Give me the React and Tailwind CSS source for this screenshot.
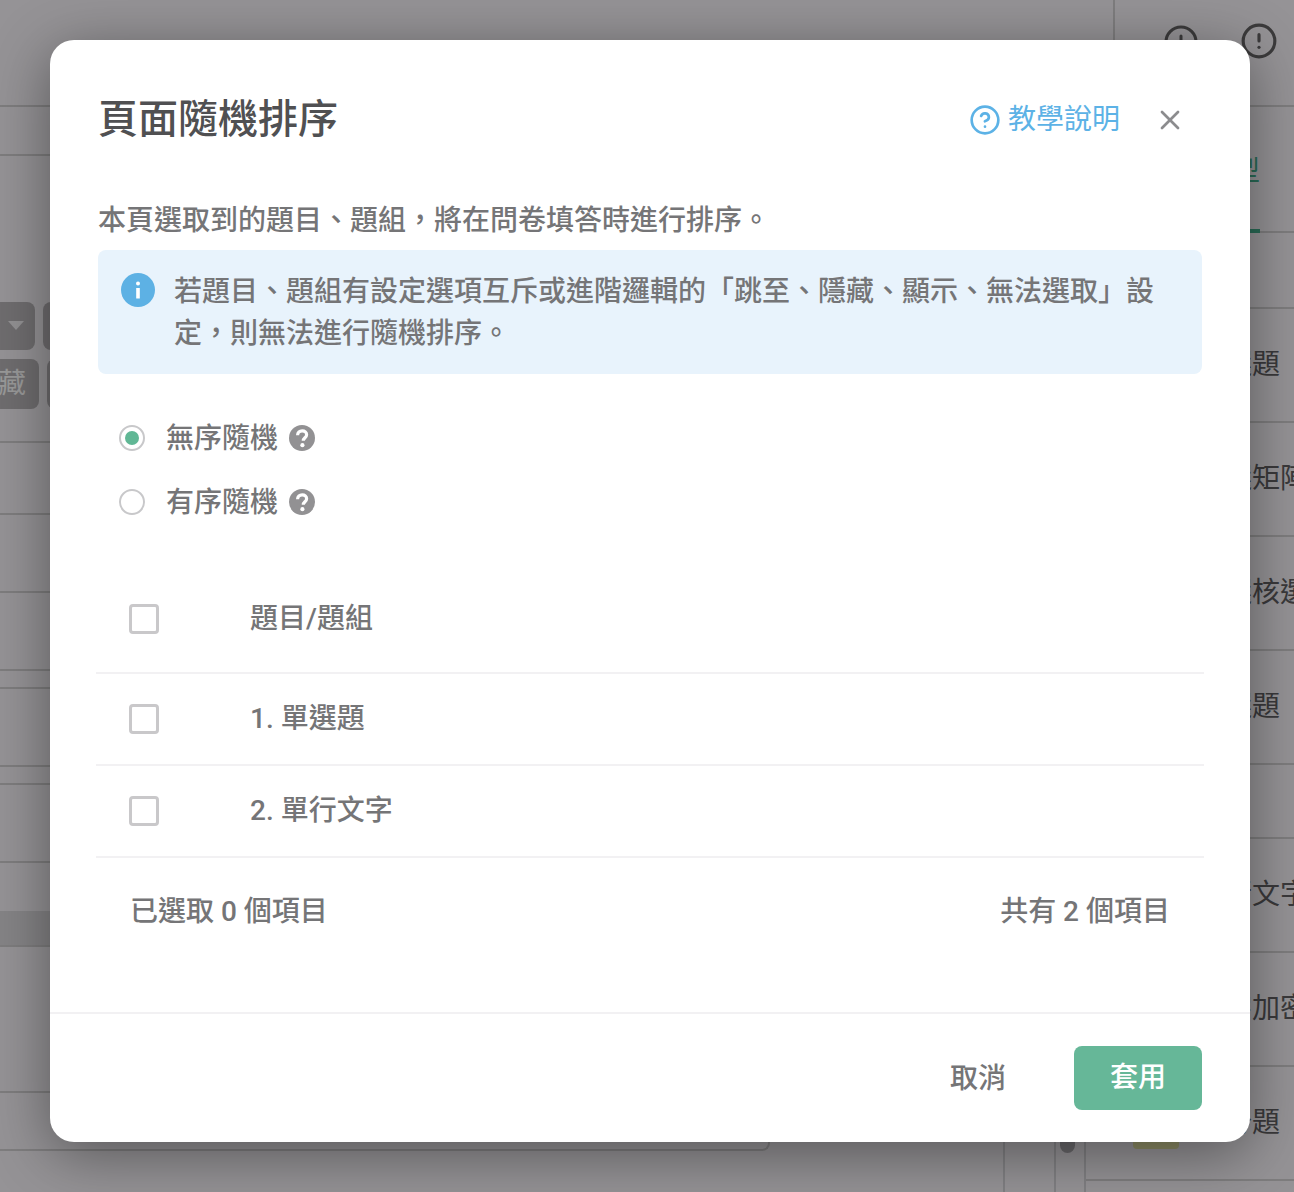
import React from 'react';
import { CircleAlert, CircleHelp, X } from 'lucide-react';

const leftRows = [
  { h: 'h-[72px]' },
  { h: 'h-[78px]' },
  { h: 'h-[78px]' },
  { h: 'h-[18px]' },
  { h: 'h-[78px]' },
  { h: 'h-[18px]' },
  { h: 'h-[78px]' },
];

const sideRows = [
  { label: '單選題', h: 'h-[114px]' },
  { label: '單選矩陣', h: 'h-[114px]' },
  { label: '複選核選', h: 'h-[114px]' },
  { label: '多選題', h: 'h-[114px]' },
  { label: '', h: 'h-[74px]' },
  { label: '單行文字', h: 'h-[114px]' },
  { label: '文字加密', h: 'h-[114px]' },
  { label: '評分題', h: 'h-[114px]', icon: true },
];

const tableRows = ['1. 單選題', '2. 單行文字'];

function Checkbox() {
  return <span className="block w-[30px] h-[30px] rounded-[4px] border-[3px] border-[#c9c8ca] bg-white" />;
}

function SolidHelp() {
  return (
    <svg width="28" height="28" viewBox="0 0 28 28">
      <circle cx="14" cy="14" r="13" fill="#929193" />
      <path d="M9.6 11.2c0-2.8 2-4.4 4.6-4.4s4.4 1.6 4.4 3.9c0 3-3.3 3.1-3.3 6" fill="none" stroke="#fff" strokeWidth="3.2" />
      <circle cx="14.4" cy="21.2" r="2.1" fill="#fff" />
    </svg>
  );
}

function Radio({ checked, label }) {
  return (
    <div className="h-16 flex items-center pl-[21px]">
      <span className="w-[26px] h-[26px] rounded-full border-[2.5px] border-[#c8c8ca] flex items-center justify-center">
        {checked && <span className="w-[14px] h-[14px] rounded-full bg-[#60b795]" />}
      </span>
      <span className="ml-[21px] mr-[10px] mt-[2px]">{label}</span>
      <SolidHelp />
    </div>
  );
}

function Background() {
  return (
    <div className="h-full bg-[#f9f6fa] text-[28px] leading-[42px] text-[#616063]">
      {/* top bar */}
      <div className="h-[107px] border-b-2 border-[#d2d0d3] flex justify-end">
        <div className="w-[181px] border-l-2 border-[#d2d0d3] flex items-start justify-end pt-[22px] pr-[16px]">
          <CircleAlert size={36} strokeWidth={2} className="mr-[41px] mt-[2px] text-[#646365]" />
          <CircleAlert size={38} strokeWidth={2} className="text-[#646365]" />
        </div>
      </div>
      <div className="flex">
        {/* editor column */}
        <div className="w-[1003px]">
          <div className="h-[49px] border-b-2 border-[#d2d0d3]" />
          <div className="h-[287px] border-b-2 border-[#d2d0d3] overflow-hidden flex flex-col gap-[9px] pt-[146px]">
            <div className="flex gap-2">
              <div className="w-[80px] h-[48px] -ml-[45px] rounded-lg bg-[#b9b6ba] flex items-center justify-end pr-[11px]">
                <svg width="16" height="10" viewBox="0 0 16 10"><polygon points="0,0 16,0 8,9" fill="#f4f2f5" /></svg>
              </div>
              <div className="w-[80px] h-[48px] rounded-lg bg-[#b9b6ba]" />
            </div>
            <div className="flex gap-2">
              <div className="w-[82px] h-[50px] -ml-[43px] rounded-lg bg-[#b9b6ba] px-[13px] flex items-center whitespace-nowrap text-white">隱藏</div>
              <div className="w-[80px] h-[50px] rounded-lg bg-[#b9b6ba]" />
            </div>
          </div>
          {leftRows.map((row, i) => (
            <div key={i} className={`${row.h} border-b-2 border-[#d2d0d3]`} />
          ))}
          <div className="h-[48px]" />
          <div className="h-[36px] bg-[#dedce0] border-b-2 border-[#d2d0d3]" />
          <div className="h-[146px] border-b-2 border-[#d2d0d3]" />
          <div className="h-[58px] w-[770px] border-b-2 border-r-2 border-[#d2d0d3] rounded-br-lg" />
        </div>
        <div className="w-[51px] h-[1085px] border-l-2 border-[#d8d6da]" />
        <div className="w-[30px] h-[1085px] border-l-2 border-[#d8d6da] pl-[4px]">
          <div className="w-[15px] h-[246px] mt-[800px] rounded-full bg-[#b0aeb2]" />
        </div>
        {/* question types */}
        <div className="w-[210px] border-l-2 border-[#d8d6da]">
          <div className="h-[126px] border-b-2 border-[#d2d0d3] pl-[118px] flex">
            <div className="w-[56px] pt-[44px] border-b-[4px] -mb-[2px] border-[#45b28f] text-[#45b28f] whitespace-nowrap">題型</div>
          </div>
          <div className="h-[76px] border-b-2 border-[#d2d0d3]" />
          {sideRows.map((row, i) => (
            <div key={i} className={`${row.h} border-b-2 border-[#d2d0d3] pl-[110px] flex items-center whitespace-nowrap overflow-hidden relative`}>
              {row.icon && <span className="absolute left-[47px] top-[60px] w-[46px] h-[22px] rounded bg-[#ebe9a8]" />}
              {row.label}
            </div>
          ))}
        </div>
      </div>
    </div>
  );
}

export default function App() {
  return (
    <div className="relative w-full h-[1192px] overflow-hidden font-['Roboto','Noto_Sans_CJK_TC',sans-serif]">
      <Background />
      <div className="absolute inset-0 bg-black/40 pt-[40px] px-[50px]">
        <div className="w-[1200px] h-[1102px] bg-white rounded-[24px] shadow-[0_12px_60px_rgba(0,0,0,0.42)] flex flex-col text-[28px] leading-[42px] font-medium text-[#757577]">
          <div className="flex items-center justify-between pl-12 pr-[64px] pt-[50px]">
            <h1 className="text-[40px] leading-[60px] font-medium text-[#505052]">頁面隨機排序</h1>
            <div className="flex items-center">
              <CircleHelp size={32} strokeWidth={2} className="text-[#5cb2e6]" />
              <span className="ml-[7px] text-[#5cb2e6] font-normal">教學說明</span>
              <X size={32} strokeWidth={2} className="ml-[34px] text-[#8c8c8e]" />
            </div>
          </div>

          <div className="px-12 mt-[50px] flex flex-col flex-1">
            <p>本頁選取到的題目、題組，將在問卷填答時進行排序。</p>
            <div className="mt-[8px] h-[124px] rounded-lg bg-[#e8f3fc] flex items-start pl-[23px] pr-[24px] pt-[21px]">
              <svg width="34" height="34" viewBox="0 0 34 34" className="shrink-0 mt-[2px]">
                <circle cx="17" cy="17" r="17" fill="#5db1e4" />
                <circle cx="17" cy="10.5" r="2" fill="#fff" />
                <rect x="15.2" y="15" width="3.6" height="10.5" fill="#fff" />
              </svg>
              <p className="ml-[19px]">若題目、題組有設定選項互斥或進階邏輯的「跳至、隱藏、顯示、無法選取」設定，則無法進行隨機排序。</p>
            </div>

            <div className="mt-[32px]">
              <Radio checked label="無序隨機" />
              <Radio label="有序隨機" />
            </div>

            <div className="mt-[31px] -mx-[2px]">
              <div className="h-[109px] flex items-center border-b-2 border-[#f2f1f3] pl-[33px]">
                <Checkbox />
                <span className="ml-[91px]">題目/題組</span>
              </div>
              {tableRows.map((row) => (
                <div key={row} className="h-[92px] flex items-center border-b-2 border-[#f2f1f3] pl-[33px]">
                  <Checkbox />
                  <span className="ml-[91px]">{row}</span>
                </div>
              ))}
            </div>

            <div className="flex justify-between px-[32px] mt-[33px]">
              <span>已選取 0 個項目</span>
              <span>共有 2 個項目</span>
            </div>
          </div>

          <div className="h-[130px] border-t-2 border-[#f2f1f3] flex items-center justify-end pr-12">
            <span className="mr-[68px] mt-[2px]">取消</span>
            <span className="w-[128px] h-16 rounded-lg bg-[#66b798] text-white flex items-center justify-center">套用</span>
          </div>
        </div>
      </div>
    </div>
  );
}
